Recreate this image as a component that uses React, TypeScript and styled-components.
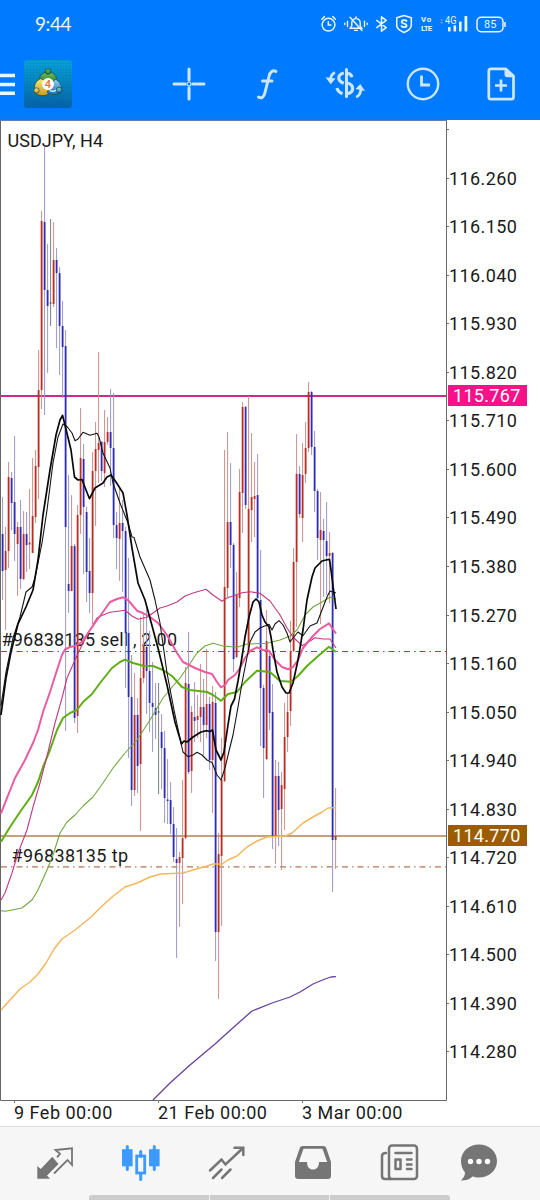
import React from 'react';
import styled, { createGlobalStyle } from 'styled-components';

const GlobalStyle = createGlobalStyle`
  * { box-sizing: border-box; }
  body { margin: 0; background: #fff; font-family: Roboto, "Liberation Sans", sans-serif; }
  svg { display: block; flex: none; }
`;

const Screen = styled.main`
  width: 540px;
  height: 1200px;
  display: flex;
  flex-direction: column;
  overflow: hidden;
  background: #fff;
  color: #1a1a1a;
`;

const Header = styled.header`
  height: 120px;
  display: flex;
  flex-direction: column;
  background: #007bff;
  border-bottom: 1px solid #2c6fc0;
`;

const StatusBar = styled.div`
  height: 48px;
  display: flex;
  align-items: center;
  padding-left: 35px;
  color: #e9f5ff;
`;

const Clock = styled.span`
  width: 286px;
  font-family: Lato, Roboto, sans-serif;
  font-size: 19px;
  line-height: 24px;
  letter-spacing: -0.4px;
`;

const StatusIcon = styled.span<{ $gap: number }>`
  margin-right: ${p => p.$gap}px;
`;

const Toolbar = styled.div`
  height: 71px;
  display: flex;
  align-items: center;
  color: #cce6ff;
`;

const MenuButton = styled.button`
  width: 24px;
  height: 22px;
  padding: 0;
  border: 0;
  background: none;
  color: #eaf6ff;
`;

const ToolGroup = styled.nav`
  flex: 1;
  display: flex;
  justify-content: space-between;
  padding: 0 19px 0 97px;
`;

const ToolButton = styled.button`
  width: 40px;
  height: 40px;
  padding: 0;
  border: 0;
  background: none;
  color: inherit;
`;

const ChartArea = styled.section`
  position: relative;
  height: 980px;
  display: flex;
`;

const ChartDrawing = styled.svg`
  margin-bottom: -5px;
`;

const PriceAxis = styled.ol`
  width: 93px;
  margin: 0;
  padding: 9px 0 0;
  list-style: none;
  &::before {
    content: '';
    display: block;
    width: 2px;
    height: 1px;
    margin-bottom: 24px;
    background: #777;
  }
`;

const PriceLabel = styled.li`
  height: 48.54px;
  display: flex;
  align-items: center;
  font-size: 18px;
  letter-spacing: 0.4px;
  &::before {
    content: '';
    width: 2px;
    height: 1px;
    background: #777;
  }
`;

const PriceTag = styled.span<{ $top: number; $color: string }>`
  position: absolute;
  left: 448px;
  top: ${p => p.$top}px;
  width: 79px;
  height: 21px;
  padding-left: 5px;
  background: ${p => p.$color};
  color: #fff;
  font-size: 18px;
  line-height: 21px;
  letter-spacing: 0.3px;
`;

const TimeAxis = styled.div`
  height: 27px;
  display: flex;
  padding-left: 14px;
  border-bottom: 1px solid #dcdcdc;
`;

const TimeLabel = styled.span`
  width: 144px;
  font-size: 18px;
  line-height: 21px;
  letter-spacing: 0.5px;
  white-space: nowrap;
  padding-top: 2px;
`;

const BottomBar = styled.footer`
  flex: 1;
  display: flex;
  flex-direction: column;
  justify-content: space-between;
  background: #f6f6f6;
`;

const TabRow = styled.nav`
  display: grid;
  grid-template-columns: 85px 87px 86px 86px 79px 40px;
  padding: 14px 0 0 35px;
`;

const Tab = styled.button<{ $active?: boolean }>`
  width: 40px;
  height: 40px;
  padding: 0;
  border: 0;
  background: none;
  color: ${p => (p.$active ? '#3d9bff' : '#757575')};
`;

const GestureBar = styled.div`
  width: 361px;
  height: 5px;
  margin-left: 89px;
  display: flex;
  gap: 1px;
  border-radius: 3px 3px 0 0;
  overflow: hidden;
`;

const GesturePart = styled.span`
  flex: 1;
  background: #cccccc;
`;

/* direction, high, body top, body bottom, low */
type Candle = ['u' | 'd' | 'n', number, number, number, number];

const candles: Candle[] = [
  ['d', 497, 534, 571, 600], ['u', 527, 551, 570, 630], ['u', 462, 477, 551, 568], ['d', 472, 478, 503, 530],
  ['d', 436, 502, 534, 561], ['u', 522, 527, 544, 596], ['d', 500, 527, 579, 589], ['u', 511, 534, 579, 580],
  ['d', 512, 534, 545, 572], ['u', 489, 542.5, 544.5, 569], ['u', 458, 516, 553, 553], ['u', 450, 466, 517, 523],
  ['u', 350, 390, 467, 499], ['u', 211, 221, 390, 409], ['d', 147, 222, 290, 415], ['d', 244, 290, 306, 373],
  ['n', 219, 302.5, 303.5, 326], ['u', 222, 260, 304, 307], ['d', 248, 260, 273, 348], ['d', 267, 273, 326, 375],
  ['d', 301, 326, 347, 398], ['d', 330, 346, 527, 731], ['d', 475, 584, 591, 613], ['u', 495, 546, 591, 591],
  ['d', 544, 546, 718, 723], ['u', 505, 515, 716, 733], ['u', 408, 458, 515, 534], ['d', 444, 459, 507, 574],
  ['d', 507, 512, 572, 602], ['d', 538, 571, 593, 613], ['u', 452, 471, 593, 624], ['u', 422, 449, 471, 526],
  ['u', 352, 443, 450, 483], ['d', 441, 442, 471, 481], ['u', 410, 442, 473, 487], ['u', 417, 432, 442, 445],
  ['d', 389, 432, 448, 486], ['d', 393, 448, 525, 538], ['d', 512, 525, 538, 569], ['u', 489, 523, 539, 581],
  ['d', 500, 523, 531, 592], ['d', 527, 531, 633, 688], ['d', 558, 633, 697, 758], ['d', 655, 697, 790, 806],
  ['u', 673, 715, 790, 796], ['d', 698, 715, 766, 793], ['u', 617, 678, 764, 831], ['u', 613, 646, 678, 683],
  ['d', 608, 647, 671, 714], ['d', 631, 671, 703, 732], ['d', 662, 703, 707, 752], ['d', 683, 708, 715, 739],
  ['n', 683, 711.5, 712.5, 794], ['d', 714, 732, 748, 789], ['d', 731, 748, 798, 823], ['d', 759, 799.5, 801, 824],
  ['d', 782, 800, 824, 834], ['d', 807, 824, 857, 862], ['d', 828, 859, 863, 958], ['u', 852, 857, 863, 927],
  ['u', 780, 838, 858, 904], ['u', 667, 683, 838, 839], ['d', 632, 684, 772, 774], ['u', 706, 712, 771, 793],
  ['d', 682, 717, 721, 742], ['u', 695, 716, 720, 738], ['u', 664, 707, 717, 742], ['d', 679, 707, 725, 755],
  ['u', 649, 704, 725, 738], ['d', 697, 704, 760, 770], ['u', 686, 702, 760, 813], ['d', 692, 703, 932, 961],
  ['u', 833, 854, 932, 999], ['u', 738, 780, 856, 926], ['u', 450, 587, 781, 782], ['u', 432, 522, 588, 597],
  ['d', 463, 522, 545, 568], ['d', 543, 545, 659, 672], ['u', 572, 595, 657, 658], ['u', 469, 492, 598, 607],
  ['u', 402, 407, 493, 533], ['d', 406, 407, 505, 509], ['u', 396, 509, 653, 654], ['u', 433, 497, 510, 542],
  ['u', 462, 496, 499, 537], ['d', 454, 495, 598, 600], ['d', 550, 600, 688, 746], ['d', 685, 688, 748, 798],
  ['u', 610, 641, 759, 760], ['d', 651, 656, 713, 730], ['d', 684, 712, 836, 849], ['u', 760, 776, 836, 864],
  ['d', 762, 776, 810, 846], ['u', 772, 785, 809, 870], ['u', 703, 737, 789, 830], ['u', 693, 712, 737, 752],
  ['u', 621, 651, 711, 726], ['u', 548, 562, 651, 652], ['u', 434, 474, 562, 627], ['d', 466, 474, 514, 518],
  ['u', 443, 475, 518, 542], ['u', 422, 448, 474, 483], ['u', 382, 392, 448, 452], ['d', 391, 392, 447, 455],
  ['d', 431, 447, 491, 512], ['d', 489, 491, 538, 560], ['u', 492, 530, 540, 624], ['d', 519, 531, 540, 597],
  ['d', 502, 541, 556, 595], ['u', 532, 553, 556, 603], ['d', 552, 553, 840, 892], ['u', 788, 836, 840, 869],
];

const wickColor = { u: '#c98f8c', d: '#9797c6', n: '#7b817d' };
const bodyColor = { u: '#bb2c22', d: '#2c2cb8', n: '#333' };

interface Average { color: string; width: number; points: string }

const averages: Average[] = [
  {
    color: '#f5b75c', width: 1.5,
    points: '1,1010 10,1000 20,989 30,982 38,974 46,963 54,949 62,939 75,930 91,917 100,908 112,897 125,887 137,883 150,877 161,874 183,873 193,870 207,866 213,864 222,864 228,860 237,856 247,847 257,841 267,837 285,836 292,833 303,823 313,817 322,812 328,808 336,807.5',
  },
  {
    color: '#6a3f9e', width: 1.3,
    points: '153,1100 170,1083 190,1065 215,1044 235,1026 252,1011 272,1003 290,997 300,992 313,984 325,979 331,977 336,976.7',
  },
  {
    color: '#72a63f', width: 1.1,
    points: '1,910.7 5,911.3 12,910 22,908 32,900 38,890 47,870 53,855 60,833 67,822 75,815 83,806 93,797 103,783 113,768 125,753 137,740 150,720 163,698 173,686 180,678 187,668 197,653 205,646 213,643.3 223,646 237,647.3 247,644 267,643.3 280,640 290,636 297,630 305,615 313,607 322,602 330,597.3 336,599',
  },
  {
    color: '#5fae14', width: 2,
    points: '1,841.7 10,827 20,812 32,795 38,782 43,767 50,750 57,730 63,718 70,713 77,710 83,702 92,694 100,683 112,668 120,662 125,659.7 133,663 143,665.7 153,666 163,670 172,676 182,687 190,690 207,692 213,695 221,700.7 228,694 237,692 245,682 257,670.7 270,672 280,681 291,681.7 298,676 307,666 317,657 329,646.7 336,652',
  },
  {
    color: '#c03a83', width: 1.1,
    points: '1,900 5,893 12,873 18,853 27,830 33,807 40,783 48,752 55,723 62,698 67,678 75,660 82,645 90,630 97,618 103,615 110,612.3 118,611.3 125,610.3 132,616 138,619.3 147,617.3 153,613 160,608 167,606 177,602 185,596 193,593 206,589.3 213,595 222,601.3 227,598 242,592.7 250,591.7 260,593.3 270,601 280,615 287,628 293,637 302,645.7 310,641 315,637.7 323,639 330,639 336,648',
  },
  {
    color: '#ec5a9f', width: 2,
    points: '1,813.3 7,798 15,778 25,760 33,743 38,730 43,712 50,692 57,670 62,655 65,649.5 70,647 75,646 82,642 88,633 97,620 103,612 110,602 117,599 123,597.3 128,600 137,610.7 143,613 150,617 158,623 167,635 177,653 183,662 195,668 205,672 212,674 217,682 221,687.3 225,685 228,680 235,675 240,668 245,658 250,651 257,647.3 263,650 269,650.7 275,660 282,667 288,669.3 293,667 298,660 303,648 312,637 320,629 329,623.3 332,628 336,633.5',
  },
  {
    color: '#151515', width: 1.1,
    points: '1,706 6,672 13,638 20,617 26,592 32,587 35,578 42,543 47,510 53,463 58,437 63,424 67,426.5 72,433 75,440.7 78,439 83,432.3 90,435.3 97,433.3 99,437 103,453 110,468 113,483 120,503 128,523 132,537 134,537.3 140,557 150,580 155,600 160,623 167,673 174,710 181,743 183,752 188,756.7 193,755 197,752.3 202,755 207,760 212,762.5 217,775 221,780 225,768 230,747 233,735 238,707 242,683 247,657 250,642 255,632 260,628 267,625 269,624.3 272,630 275,624 279,620.7 283,625 287,633 290,642 293,638 298,632 303,635.7 310,626 317,623 322,610 327,597 330,591 336,593',
  },
  {
    color: '#080808', width: 1.7,
    points: '1,715 6,678 11,652 18,624 26,607 33,590 38,560 43,515 50,470 56,435 60,420 62.5,415.3 65,425 71,450 74.5,477 78,480 82,479.5 86,490 89.5,498.7 95,488 103,483 107,477 111,475 116,482 123,493 127,515 132,548 138,583 145,600 151,622 158,648 167,685 175,722 181.5,744 184,741 187,742 193,737 201,732 207,730.7 210,731.5 212.5,730 216,750 221,760 224,752 228,725 231,706 234.5,699 238,681 242,657 245,637 249,617 253,602 256,599 259,602 262,615 265,622 269,627 271,637 273,650 277,672 282,687 286,693 289,693 293,683 298,660 303,630 307,600 312,577 315,568 322,561 326,560 329.5,559.3 331,570 336,609',
  },
];

const PriceChart = () => (
  <ChartDrawing width="447" height="985" viewBox="0 120 447 985">
    <path d="M0 120.5H447" stroke="#5a82b4" />
    <path d="M0.5 121V1100.5H446.5V121" fill="none" stroke="#666" />
    <path d="M14.5 1100v3M158.5 1100v3M302.5 1100v3" stroke="#777" />
    <path d="M1 396H446" stroke="#cf2885" strokeWidth="2.2" />
    <path d="M1 836H446" stroke="#ad8352" strokeWidth="1.6" />
    <path d="M1 651.5H446" stroke="#1f8a2c" strokeWidth="1.2" strokeDasharray="6 4 1.5 4" />
    <path d="M1 866.8H446" stroke="#bd7350" strokeWidth="1.3" strokeDasharray="6 4 1.5 4" />
    <g fontSize="18" fill="#1a1a1a" fontFamily="Roboto, sans-serif">
      <text x="7.5" y="147" textLength="95.5">USDJPY, H4</text>
      <text x="1.5" y="646" textLength="175.5">#96838135 sell , 2.00</text>
      <text x="11.5" y="862" textLength="116.5">#96838135 tp</text>
    </g>
    {candles.map(([dir, high, top, bottom, low], i) => (
      <g key={i}>
        <rect x={2.1 + i * 3} y={high} width="1" height={low - high} fill={wickColor[dir]} />
        <rect x={1.7 + i * 3} y={top} width="1.8" height={bottom - top} fill={bodyColor[dir]} />
      </g>
    ))}
    {averages.map(line => (
      <polyline key={line.color} points={line.points} fill="none" stroke={line.color} strokeWidth={line.width} strokeLinejoin="round" />
    ))}
  </ChartDrawing>
);

const prices = Array.from({ length: 19 }, (_, i) => (116.26 - i * 0.11).toFixed(3));

const AlarmIcon = () => (
  <svg width="16" height="18" viewBox="0 0 16 18" fill="none" stroke="currentColor" strokeWidth="1.5" strokeLinecap="round">
    <circle cx="7.5" cy="9.7" r="6.4" /><path d="M7.3 6.8v3.3h2.6M.8 4.2 3.4 1.6M14.4 4.2l-2.6-2.6" />
  </svg>
);

const MutedBellIcon = () => (
  <svg width="24" height="18" viewBox="0 0 24 18" fill="none" stroke="currentColor" strokeWidth="1.4" strokeLinecap="round">
    <path d="M6.2 13.2h11.6l-1.6-2.4V7.5c0-2.3-1.6-3.9-4.2-3.9S7.8 5.2 7.8 7.5v3.3zM12 3.4V1.8M10.6 15.4h2.8M6 2.3l12 13.2" />
    <path d="M3.5 6.3v5.2M.8 8.2v1.4M20.5 6.3v5.2M23.2 8.2v1.4" />
  </svg>
);

const BluetoothIcon = () => (
  <svg width="12" height="18" viewBox="0 0 12 18" fill="none" stroke="currentColor" strokeWidth="1.5" strokeLinejoin="round">
    <path d="M.3 5 10.2 12.6 5.5 16.2V1.8l4.7 3.6L.3 13" />
  </svg>
);

const ShieldIcon = () => (
  <svg width="17" height="20" viewBox="0 0 17 20" fill="none" stroke="currentColor" strokeWidth="1.6" strokeLinejoin="round" strokeLinecap="round">
    <path d="M8 1.5 15.3 3.7v7.6c0 3.5-3.8 5.7-7.3 7.2-3.5-1.5-7.3-3.7-7.3-7.2V3.7z" />
    <path d="M10.5 7C9.9 5.7 5.7 5.5 5.7 7.9c0 2.3 4.9 1.2 4.9 3.6 0 2.4-4.4 2-5.1.5" strokeWidth="1.8" />
  </svg>
);

const VolteBadge = styled.span`
  width: 12px;
  margin-right: 7px;
  display: flex;
  flex-direction: column;
  font-size: 8px;
  line-height: 8px;
  font-weight: 700;
`;

const VolteLine = styled.span<{ $spacing: number }>`
  height: 9px;
  line-height: 9px;
  letter-spacing: ${p => p.$spacing}px;
`;

const SignalIcon = () => (
  <svg width="28" height="18" viewBox="0 0 28 18" fill="currentColor">
    <path d="M0 5.5 1.5 3.5 3 5.5zM0 7 1.5 9 3 7z" opacity=".35" />
    <text x="5" y="8.5" fontSize="10" fontFamily="Roboto, sans-serif" textLength="11.5" lengthAdjust="spacingAndGlyphs">4G</text>
    <rect x="8" y="12" width="2.6" height="4.5" rx=".7" /><rect x="13.5" y="10.3" width="2.6" height="6.2" rx=".7" />
    <rect x="19" y="6.5" width="2.6" height="10" rx=".7" /><rect x="24.5" y="1" width="2.8" height="15.5" rx=".7" />
  </svg>
);

const BatteryIcon = () => (
  <svg width="30" height="17" viewBox="0 0 30 17" fill="none" stroke="currentColor" strokeWidth="1.5">
    <rect x="1" y="1.2" width="26" height="14.6" rx="4.2" /><path d="M29 6v5" strokeWidth="1.6" />
    <text x="8" y="12.4" stroke="none" fill="currentColor" fontSize="11" fontFamily="Roboto, sans-serif" textLength="12.5">85</text>
  </svg>
);

const AppLogo = () => (
  <svg width="48" height="48" viewBox="0 0 48 48">
    <defs>
      <linearGradient id="tile" x1="0" y1="0" x2="0" y2="1">
        <stop offset="0" stopColor="#08a2d8" /><stop offset=".5" stopColor="#0583be" /><stop offset="1" stopColor="#0562a8" />
      </linearGradient>
      <linearGradient id="gold" x1="0" y1="0" x2="0" y2="1"><stop offset="0" stopColor="#f6ea7c" /><stop offset="1" stopColor="#cf9a1c" /></linearGradient>
      <linearGradient id="leaf" x1="0" y1="0" x2="0" y2="1"><stop offset="0" stopColor="#6cbd55" /><stop offset="1" stopColor="#237b2e" /></linearGradient>
      <linearGradient id="sky" x1="0" y1="0" x2="0" y2="1"><stop offset="0" stopColor="#8cd2f3" /><stop offset="1" stopColor="#1a73b4" /></linearGradient>
      <pattern id="mesh" width="3" height="3" patternUnits="userSpaceOnUse"><path d="M0 0H3M0 0V3" stroke="#035c96" strokeWidth=".4" opacity=".5" /></pattern>
    </defs>
    <rect width="48" height="48" rx="3.5" fill="url(#tile)" /><rect width="48" height="48" rx="3.5" fill="url(#mesh)" />
    <g stroke="#174c49" strokeWidth=".8">
      <path d="M15.5 20c0-5 3.5-8 8.5-8s8.5 3 8.5 8l-2 5H18z" fill="url(#leaf)" />
      <circle cx="24" cy="11.5" r="2.8" fill="url(#leaf)" />
      <path d="M17 18.5c-5 2-7.5 6.5-6 11l1 4c4 3 10 3 13.5-.5l1-8z" fill="url(#gold)" />
      <circle cx="12.5" cy="30.5" r="2.7" fill="url(#gold)" />
      <path d="M31 19c4.5 2 7.5 6.5 6.5 12-1 4-9 5-14.5 1.5l4-7z" fill="url(#sky)" />
      <circle cx="35" cy="30" r="2.8" fill="url(#sky)" />
      <path d="M25 29c2 3 5 3 7 1" fill="none" stroke="#d6f1ff" strokeWidth="1.3" />
    </g>
    <circle cx="24" cy="24" r="6" fill="#fff" />
    <text x="24" y="28" fontSize="11" textAnchor="middle" fontWeight="500" fill="#e4712f" fontFamily="Roboto, sans-serif">4</text>
  </svg>
);

const CrosshairIcon = () => (
  <svg width="40" height="40" viewBox="0 0 40 40" fill="none" stroke="currentColor" strokeWidth="3" strokeLinecap="round">
    <path d="M20 5v11M20 24v11M5 20h11M24 20h11" /><circle cx="20" cy="20" r="2" strokeWidth="1.2" />
  </svg>
);

const FunctionIcon = () => (
  <svg width="40" height="40" viewBox="0 0 40 40" fill="none" stroke="currentColor" strokeWidth="3" strokeLinecap="round">
    <path d="M29 7.5c-3-2-6 .5-7 5l-4 16c-1 4.5-3.5 6.5-6.5 4.5M15.5 17h9.5" />
  </svg>
);

const TradeIcon = () => (
  <svg width="40" height="40" viewBox="0 0 40 40" fill="none" stroke="currentColor" strokeWidth="3.2">
    <path d="M21.5 5.5v27" strokeWidth="3" strokeLinecap="round" />
    <path d="M18.8 9c-3.3.8-5 2.6-5 5s1.7 4 5 5.2M23 9.3c2.2.5 3.5 1.8 4 3.8M22 19c7.5 1.5 7.5 9.5 0 10.8M12 24c.7 3 2.5 4.7 5.5 5.6" />
    <path d="M10 8.5C7.5 9.5 6 11.5 5.5 15M31 33c3-1 4.7-3.5 5-8" strokeWidth="2.8" />
    <path d="M.5 13.3 10.5 14.5 5.7 20.3zM30.5 25 40 27l-4.700-7z" fill="currentColor" stroke="none" />
  </svg>
);

const HistoryIcon = () => (
  <svg width="40" height="40" viewBox="0 0 40 40" fill="none" stroke="currentColor" strokeWidth="2.4">
    <circle cx="20" cy="20" r="15.2" /><path d="M18.5 11.5V21h8.5" strokeWidth="2.8" />
  </svg>
);

const NewOrderIcon = () => (
  <svg width="40" height="40" viewBox="0 0 40 40" fill="none" stroke="currentColor" strokeWidth="2.7" strokeLinejoin="round">
    <path d="M10 4.8h14.5L32.5 12v21c0 1.4-.8 2.2-2.2 2.2H10c-1.4 0-2.2-.8-2.2-2.2V7c0-1.4.8-2.2 2.2-2.2z" />
    <path d="M23.5 4v6.5c0 1.8 1 2.8 2.8 2.8H33V11.5L25.5 4z" fill="currentColor" stroke="none" /><path d="M20 15.5v12M14 21.5h12" />
  </svg>
);

const QuotesIcon = () => (
  <svg width="40" height="40" viewBox="0 0 40 40" fill="none">
    <path d="M2.3 25v12.8H15L12 34.6 23.5 23 17.3 15.8 5.8 28z" fill="currentColor" />
    <path d="M22 16.3 25 12.8 20.5 9 37 7.3V24l-4.5-5L19 32.5" stroke="currentColor" strokeWidth="1.8" />
  </svg>
);

const CandlesIcon = () => (
  <svg width="40" height="40" viewBox="0 0 40 40" fill="none" stroke="currentColor" strokeWidth="3" strokeLinecap="round">
    <path d="M7.3 5.5v23M34.3 5.5v23M20.7 10.5v5M20.7 33.5v5" />
    <rect x="3.3" y="9.5" width="8" height="14.5" fill="currentColor" strokeWidth="2.6" />
    <rect x="30.3" y="9.5" width="8" height="14.5" fill="currentColor" strokeWidth="2.6" /><rect x="16.7" y="15" width="8" height="17" strokeWidth="2.8" />
  </svg>
);

const TrendIcon = () => (
  <svg width="40" height="40" viewBox="0 0 40 40" fill="none" stroke="currentColor" strokeWidth="2.5" strokeLinecap="round">
    <path d="M3 29.5 14.5 18.5 18.5 23.5 36 7M27.5 6.8H36.3V14M6 37l8.5-8.5M15 37l8.5-8.5" />
  </svg>
);

const InboxIcon = () => (
  <svg width="40" height="40" viewBox="0 0 40 40">
    <path fill="currentColor" fillRule="evenodd" d="M10 5h20c1.7 0 2.7.8 3.3 2.3L38 21v14c0 1.7-1.3 3-3 3H5c-1.7 0-3-1.3-3-3V21L6.7 7.3C7.3 5.8 8.3 5 10 5zm.5 2.8L5.8 21H14c0 5 2.5 7.5 6 7.5s6-2.5 6-7.5h8.2L29.5 7.8z" />
  </svg>
);

const NewsIcon = () => (
  <svg width="40" height="40" viewBox="0 0 40 40" fill="none" stroke="currentColor" strokeWidth="2.5" strokeLinejoin="round" strokeLinecap="round">
    <rect x="10" y="4.5" width="28" height="33.5" rx="3" /><path d="M7 12c-3 0-4 1-4 3v20c0 2 1 3 3 3h6M16.5 12h16M28 18.5h4.5M28 23.5h4.5M28 28h4.5" />
    <rect x="16.5" y="18.5" width="5" height="9.5" />
  </svg>
);

const ChatIcon = () => (
  <svg width="40" height="40" viewBox="0 0 40 40">
    <path fill="currentColor" d="M21 3.5c10 0 18 7 18 16.5s-8 16.5-18 16.5c-2.5 0-4.5-.5-6.5-1-3 3-7 4-11.5 4 2.5-2.5 4-5 4-8C4.5 28.5 3 24.5 3 20 3 10.500 11 3.500 21 3.500z" />
    <g fill="#fff"><circle cx="12.5" cy="20.5" r="2.7" /><circle cx="21" cy="20.5" r="2.7" /><circle cx="29.5" cy="20.5" r="2.7" /></g>
  </svg>
);

const App = () => (
  <Screen>
    <GlobalStyle />
    <Header>
      <StatusBar>
        <Clock>9:44</Clock>
        <StatusIcon $gap={7}><AlarmIcon /></StatusIcon>
        <StatusIcon $gap={8}><MutedBellIcon /></StatusIcon>
        <StatusIcon $gap={8}><BluetoothIcon /></StatusIcon>
        <StatusIcon $gap={8}><ShieldIcon /></StatusIcon>
        <VolteBadge>
          <VolteLine $spacing={0.6}>Vo</VolteLine>
          <VolteLine $spacing={-0.8}>LTE</VolteLine>
        </VolteBadge>
        <StatusIcon $gap={8}><SignalIcon /></StatusIcon>
        <BatteryIcon />
      </StatusBar>
      <Toolbar>
        <MenuButton aria-label="Menu">
          <svg width="15" height="22" viewBox="0 0 15 22" stroke="currentColor" strokeWidth="3.6"><path d="M0 2.5h15M0 11.5h15M0 20.2h15" /></svg>
        </MenuButton>
        <AppLogo />
        <ToolGroup>
          <ToolButton aria-label="Crosshair"><CrosshairIcon /></ToolButton>
          <ToolButton aria-label="Indicators"><FunctionIcon /></ToolButton>
          <ToolButton aria-label="Trade"><TradeIcon /></ToolButton>
          <ToolButton aria-label="Period"><HistoryIcon /></ToolButton>
          <ToolButton aria-label="New order"><NewOrderIcon /></ToolButton>
        </ToolGroup>
      </Toolbar>
    </Header>
    <ChartArea>
      <PriceChart />
      <PriceAxis>
        {prices.map(p => <PriceLabel key={p}>{p}</PriceLabel>)}
      </PriceAxis>
      <PriceTag $top={265} $color="#f8128a">115.767</PriceTag>
      <PriceTag $top={705} $color="#9c5d00">114.770</PriceTag>
    </ChartArea>
    <TimeAxis>
      <TimeLabel>9 Feb 00:00</TimeLabel>
      <TimeLabel>21 Feb 00:00</TimeLabel>
      <TimeLabel>3 Mar 00:00</TimeLabel>
    </TimeAxis>
    <BottomBar>
      <TabRow>
        <Tab aria-label="Quotes"><QuotesIcon /></Tab>
        <Tab aria-label="Chart" $active><CandlesIcon /></Tab>
        <Tab aria-label="Trade"><TrendIcon /></Tab>
        <Tab aria-label="History"><InboxIcon /></Tab>
        <Tab aria-label="News"><NewsIcon /></Tab>
        <Tab aria-label="Messages"><ChatIcon /></Tab>
      </TabRow>
      <GestureBar><GesturePart /><GesturePart /><GesturePart /></GestureBar>
    </BottomBar>
  </Screen>
);

export default App;
